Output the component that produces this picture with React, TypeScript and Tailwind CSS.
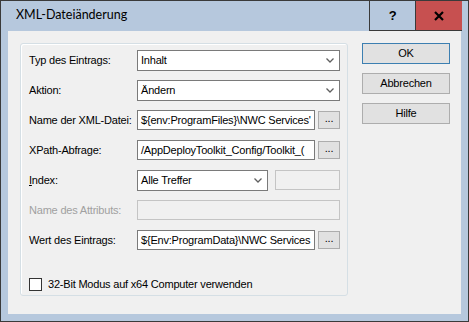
import React from "react";

const uiFont = { fontFamily: '"Liberation Sans", Arial, sans-serif' };
const titleFont = { fontFamily: 'Lato, "Noto Sans", sans-serif' };

function Chevron() {
  return (
    <svg width="8" height="5" viewBox="0 0 8 5" className="mr-[5px]">
      <path d="M0.5 0.5 L4 4 L7.5 0.5" fill="none" stroke="#606060" strokeWidth="1.3" />
    </svg>
  );
}

function Combo({ value, width = "w-[203px]" }: { value: string; width?: string }) {
  return (
    <div
      className={`flex h-[21px] ${width} items-center justify-between border border-[#7a7a7a] bg-white pl-[3px] text-[11px] text-black`}
    >
      <span>{value}</span>
      <Chevron />
    </div>
  );
}

function PathField({ value }: { value: string }) {
  return (
    <div className="flex items-center gap-[3px]">
      <div className="flex h-[20px] w-[178px] items-center overflow-hidden whitespace-nowrap border border-[#7a7a7a] bg-white pl-[3px] text-[11px] text-black">
        {value}
      </div>
      <button
        type="button"
        className="flex h-[18px] w-[22px] items-center justify-center border border-[#adadad] bg-[#e1e1e1] pb-[4px] text-[11px] leading-none text-black"
      >
        ...
      </button>
    </div>
  );
}

function Row({ label, disabled, children }: { label: React.ReactNode; disabled?: boolean; children: React.ReactNode }) {
  return (
    <div className="flex h-[21px] items-start">
      <div
        className={`flex h-[21px] w-[108px] items-center text-[11px] ${disabled ? "text-[#a0a0a0]" : "text-black"}`}
      >
        {label}
      </div>
      {children}
    </div>
  );
}

function DialogButton({ label, primary }: { label: string; primary?: boolean }) {
  return (
    <button
      type="button"
      className={`flex h-[21px] w-[88px] items-center justify-center border bg-[#e1e1e1] text-[11px] text-black ${
        primary ? "border-[#3c7fb1]" : "border-[#adadad]"
      }`}
    >
      {label}
    </button>
  );
}

export default function App() {
  return (
    <div className="h-[322px] w-[469px] bg-white tracking-[-0.2px]" style={uiFont}>
      <div className="flex h-[322px] w-[469px] flex-col border border-[#3a3a3a] bg-[#b6c8dd]">
        <div className="flex h-[30px] items-start">
          <div
            className="flex h-[29px] flex-1 items-center pl-[15px] text-[12.5px] tracking-normal text-black"
            style={titleFont}
          >
            XML-Dateiänderung
          </div>
          <div className="flex h-[30px] w-[47px] items-center justify-center border border-t-0 border-[#3a3a3a] text-[13px] font-bold text-black">
            ?
          </div>
          <div className="flex h-[30px] w-[46px] items-center justify-center border-b border-[#3a3a3a] bg-[#c75050]">
            <svg width="10" height="10" viewBox="0 0 10 10">
              <path d="M1 1 L9 9 M9 1 L1 9" stroke="#000" strokeWidth="2.2" />
            </svg>
          </div>
          <div className="w-[6px]" />
        </div>

        <div className="ml-[7px] flex h-[283px] w-[453px] items-start gap-[14px] bg-[#f0f0f0] pl-[12px] pt-[12px]">
          <div className="flex h-[253px] w-[328px] flex-col rounded-[3px] border border-[#d5dfe5] pl-[8px] pt-[6px] shadow-[inset_1px_1px_0_#ffffff]">
            <div className="flex flex-col gap-[9px]">
              <Row label="Typ des Eintrags:">
                <Combo value="Inhalt" />
              </Row>
              <Row label="Aktion:">
                <Combo value="Ändern" />
              </Row>
              <Row label="Name der XML-Datei:">
                <PathField value="${env:ProgramFiles}\NWC Services'" />
              </Row>
              <Row label="XPath-Abfrage:">
                <PathField value="/AppDeployToolkit_Config/Toolkit_(" />
              </Row>
              <Row
                label={
                  <span>
                    <span className="underline">I</span>ndex:
                  </span>
                }
              >
                <div className="flex items-start gap-[7px]">
                  <Combo value="Alle Treffer" width="w-[131px]" />
                  <div className="h-[20px] w-[65px] border border-[#c4c4c4] bg-[#f0f0f0]" />
                </div>
              </Row>
              <Row label="Name des Attributs:" disabled>
                <div className="h-[20px] w-[203px] border border-[#c4c4c4] bg-[#f0f0f0]" />
              </Row>
              <Row label="Wert des Eintrags:">
                <PathField value="${Env:ProgramData}\NWC Services" />
              </Row>
            </div>

            <label className="mt-[25px] flex items-center gap-[6px] text-[11px] text-black">
              <span className="h-[13px] w-[13px] border border-[#333333] bg-white" />
              32-Bit Modus auf x64 Computer verwenden
            </label>
          </div>

          <div className="flex flex-col gap-[9px]">
            <DialogButton label="OK" primary />
            <DialogButton label="Abbrechen" />
            <DialogButton label="Hilfe" />
          </div>
        </div>
      </div>
    </div>
  );
}
